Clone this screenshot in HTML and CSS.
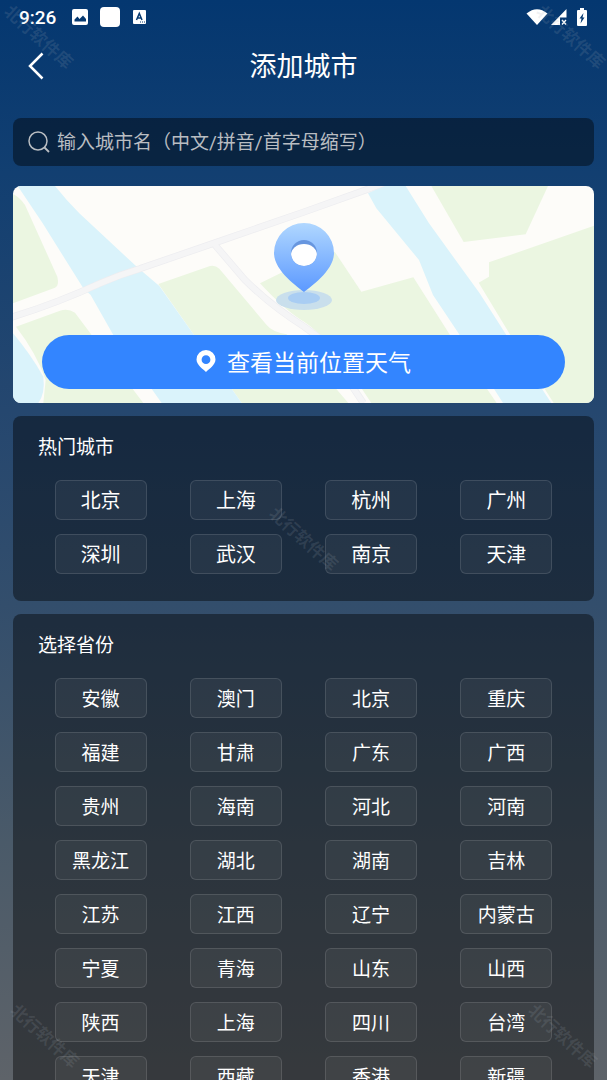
FILE: index.html
```html
<!DOCTYPE html>
<html lang="zh-CN">
<head>
  <meta charset="utf-8">
  <meta name="viewport" content="width=device-width, initial-scale=1">
  <title>添加城市</title>
  <link rel="stylesheet" href="styles.css">
</head>
<body>
<div class="screen">

  <div class="statusbar">
    <span class="time">9:26</span>
    <svg class="st-image" width="16" height="16" viewBox="0 0 16 16">
      <rect width="16" height="16" rx="2" fill="#fff"/>
      <path d="M2.500 12.500v-2l3-3 2 2.500 3.500-3.500 3 3.500v2.500z" fill="#063970"/>
    </svg>
    <span class="st-app"></span>
    <svg class="st-lang" width="13" height="14" viewBox="0 0 13 14">
      <rect width="13" height="14" rx="1" fill="#fff"/>
      <path d="M3.500 10 6.300 3.500 9 10M4.500 8h3.500" fill="none" stroke="#063970" stroke-width="1.500"/>
      <path d="M7 12h1M9 12h1M11 12h1" stroke="#063970"/>
    </svg>
    <span class="spacer"></span>
    <svg width="22" height="16" viewBox="0 0 22 16">
      <path d="M.5 4.500Q11-4 21.500 4.500L11 16z" fill="#fff"/>
    </svg>
    <svg class="st-cell" width="16" height="16" viewBox="0 0 16 16">
      <path d="M15.500 0v8.500h-6.500V16H0z" fill="#fff"/>
      <path d="M11 11l4 4.500M15 11l-4 4.500" stroke="#fff" stroke-width="1.300"/>
    </svg>
    <svg class="st-battery" width="10" height="18" viewBox="0 0 10 18">
      <path d="M3 0h4v2h2q1 0 1 1v14q0 1-1 1H1q-1 0-1-1V3q0-1 1-1h2z" fill="#fff"/>
      <path d="M6.500 5 2.500 10.500h2L3.500 15.500 7.500 9.500h-2z" fill="#063970"/>
    </svg>
  </div>

  <header class="header">
    <button class="back" type="button" aria-label="返回">
      <svg width="16" height="28" viewBox="0 0 16 28">
        <path d="M14.500 1.500 2 14l12.500 12.500" fill="none" stroke="#fff" stroke-width="2.500"/>
      </svg>
    </button>
    <h1>添加城市</h1>
  </header>

  <main class="content">
    <label class="search">
      <svg width="22" height="22" viewBox="0 0 22 22">
        <circle cx="10" cy="10" r="9" fill="none" stroke="#b9bdc2" stroke-width="1.500"/>
        <path d="M16.500 16.500l4.500 4.500" stroke="#b9bdc2" stroke-width="1.800"/>
      </svg>
      <input type="text" aria-label="搜索城市" placeholder="输入城市名（中文/拼音/首字母缩写）">
    </label>

    <section class="map">
      <svg class="map-bg" viewBox="0 0 1743 651" preserveAspectRatio="xMidYMid slice">
        <rect width="1743" height="651" fill="#fdfcf9"/>
        <g transform="translate(-39 -18)">
          <!-- parks -->
          <g fill="#ebf6e1">
            <path d="M39 42Q60 52 75 75L172 290Q178 318 165 323L39 370z"/>
            <path d="M48 440 180 392Q205 385 225 398L275 465 430 669H130L137 600Q110 520 48 440z"/>
            <path d="M475 312 630 258Q645 254 658 266L800 435Q815 455 860 463L1009 627 1045 669H725z"/>
            <path d="M780 310 850 275 1004 215 1084 335 1240 292 1350 465 1490 669H1114L1086 627 960 465Q930 435 900 418 850 385 780 310z"/>
            <path d="M1294 18H1644L1577 163 1391 186z"/>
            <path d="M1782 137 1467 247V290L1436 308 1531 465 1661 669H1782z"/>
          </g>
          <!-- water -->
          <g fill="#daf3fb">
            <path d="M53 18H165Q200 62 238 100L412 262 478 318 582 465 725 669H485L340 465 272 345 250 325 128 130z"/>
            <path d="M39 460Q90 520 130 590 136 640 115 669H39z"/>
            <path d="M1104 40 1149 18H1217L1287 130 1439 340 1519 465 1654 669H1509L1379 465 1299 345 1257 240 1129 85z"/>
          </g>
          <!-- roads -->
          <g fill="none" stroke="#ededf0" stroke-width="21">
            <path d="M30 413Q170 370 300 310 360 284 420 266L640 190 912 96 1100 29 1150 10"/>
            <path d="M645 195 735 300Q810 375 912 440L960 475 1090 669"/>
          </g>
          <g fill="none" stroke="#f5f5f6" stroke-width="17">
            <path d="M645 195 735 300Q810 375 912 440L960 475 1090 669"/>
            <path d="M30 413Q170 370 300 310 360 284 420 266L640 190 912 96 1100 29 1150 10"/>
          </g>
        </g>
      </svg>
      <svg class="pin" width="62" height="88" viewBox="0 0 62 88">
        <defs>
          <linearGradient id="pinFill" x1="0" y1="0" x2="0" y2="1">
            <stop offset="0" stop-color="#b0d7ff"/>
            <stop offset="1" stop-color="#5c99ff"/>
          </linearGradient>
          <clipPath id="hole"><circle cx="31" cy="30" r="13"/></clipPath>
        </defs>
        <ellipse cx="31" cy="77" rx="28" ry="10" fill="#c9dfec"/>
        <ellipse cx="31" cy="75" rx="16" ry="6" fill="#a9cdf3"/>
        <path d="M31 69C25 64 1 48 1 30a30 30 0 0 1 60 0C61 48 37 64 31 69z" fill="url(#pinFill)"/>
        <circle cx="31" cy="30" r="13" fill="#6796df"/>
        <ellipse cx="31" cy="32" rx="13" ry="11" fill="#fff" clip-path="url(#hole)"/>
      </svg>
      <button class="locate" type="button">
        <svg width="20" height="22" viewBox="0 0 20 22">
          <path fill-rule="evenodd" d="M10 22C7 19 .5 15 .5 9.500a9.500 9.500 0 0 1 19 0C19.500 15 13 19 10 22zM10 5.300a4.400 4.400 0 1 0 0 8.800 4.400 4.400 0 0 0 0-8.800z" fill="#fff"/>
        </svg>
        查看当前位置天气
      </button>
    </section>

    <section class="panel hot">
      <h2>热门城市</h2>
      <div class="grid">
        <button type="button">北京</button>
        <button type="button">上海</button>
        <button type="button">杭州</button>
        <button type="button">广州</button>
        <button type="button">深圳</button>
        <button type="button">武汉</button>
        <button type="button">南京</button>
        <button type="button">天津</button>
      </div>
    </section>

    <section class="panel">
      <h2>选择省份</h2>
      <div class="grid">
        <button type="button">安徽</button>
        <button type="button">澳门</button>
        <button type="button">北京</button>
        <button type="button">重庆</button>
        <button type="button">福建</button>
        <button type="button">甘肃</button>
        <button type="button">广东</button>
        <button type="button">广西</button>
        <button type="button">贵州</button>
        <button type="button">海南</button>
        <button type="button">河北</button>
        <button type="button">河南</button>
        <button type="button">黑龙江</button>
        <button type="button">湖北</button>
        <button type="button">湖南</button>
        <button type="button">吉林</button>
        <button type="button">江苏</button>
        <button type="button">江西</button>
        <button type="button">辽宁</button>
        <button type="button">内蒙古</button>
        <button type="button">宁夏</button>
        <button type="button">青海</button>
        <button type="button">山东</button>
        <button type="button">山西</button>
        <button type="button">陕西</button>
        <button type="button">上海</button>
        <button type="button">四川</button>
        <button type="button">台湾</button>
        <button type="button">天津</button>
        <button type="button">西藏</button>
        <button type="button">香港</button>
        <button type="button">新疆</button>
      </div>
    </section>
  </main>

  <span class="mark mark-tl">北行软件库</span>
  <span class="mark mark-tr">北行软件库</span>
  <span class="mark mark-mid">北行软件库</span>
  <span class="mark mark-bl">北行软件库</span>
  <span class="mark mark-br">北行软件库</span>
</div>
</body>
</html>
```
FILE: styles.css
```css
* {
  box-sizing: border-box;
}
body {
  margin: 0;
  font-family: Roboto, "Noto Sans CJK SC", sans-serif;
  color: #fff;
}
button, input {
  font-family: inherit;
  color: inherit;
  margin: 0;
}
svg {
  display: block;
  flex: none;
}
.screen {
  position: relative;
  height: 100vh;
  overflow: hidden;
  background: linear-gradient(#043770 0%, #123f71 16%, #25476f 38%, #334e6c 56%, #4a5a69 78%, #5e6369 100%);
}

/* status bar */
.statusbar {
  display: flex;
  align-items: center;
  height: 34px;
  padding: 0 20px 0 19px;
}
.time {
  font-size: 19px;
  font-weight: 500;
}
.st-image {
  margin-left: 16px;
}
.st-app {
  width: 20px;
  height: 20px;
  margin: 0 13px 0 12px;
  border-radius: 4px;
  background: #fff;
}
.spacer {
  flex: 1;
}
.st-cell {
  margin-left: 3px;
}
.st-battery {
  margin-left: 10px;
}

/* title */
.header {
  display: grid;
  grid-template-columns: 72px 1fr 72px;
  align-items: center;
  height: 64px;
}
.header h1 {
  margin: 0;
  padding-top: 2px;
  font-size: 27px;
  font-weight: 400;
  line-height: 40px;
  text-align: center;
}
.back {
  display: flex;
  justify-content: center;
  height: 64px;
  padding: 0;
  align-items: center;
  border: 0;
  background: none;
}

.content {
  display: flex;
  flex-direction: column;
  gap: 13px;
  padding: 20px 13px 0;
}
.search {
  display: flex;
  align-items: center;
  gap: 7px;
  height: 48px;
  margin-bottom: 7px;
  padding: 0 15px;
  border-radius: 8px;
  background: rgba(0, 0, 0, .42);
}
.search input {
  flex: 1;
  min-width: 0;
  padding: 0;
  border: 0;
  outline: 0;
  background: none;
  font-size: 19px;
}
.search input::placeholder {
  color: #b9bdc2;
  opacity: 1;
}

/* map card */
.map {
  position: relative;
  display: flex;
  flex-direction: column;
  align-items: center;
  padding: 37px 29px 14px;
  border-radius: 8px;
  overflow: hidden;
}
.map-bg {
  position: absolute;
  top: 0;
  left: 0;
  width: 100%;
  height: 100%;
}
.pin {
  position: relative;
}
.locate {
  position: relative;
  display: flex;
  align-items: center;
  justify-content: center;
  gap: 11px;
  width: 100%;
  height: 54px;
  margin: 24px 0 0;
  padding: 0 0 2px;
  border: 0;
  border-radius: 27px;
  background: #3385ff;
  font-size: 23px;
}

/* city lists */
.panel {
  padding: 17px 20px 20px;
  border-radius: 8px;
  background: rgba(0, 0, 0, .42);
}
.panel h2 {
  margin: 0 0 10px 5px;
  font-size: 19px;
  font-weight: 400;
  line-height: 30px;
}
.grid {
  display: grid;
  grid-template-columns: repeat(4, 1fr);
  grid-auto-rows: 54px;
  place-items: center;
}
.grid button {
  width: 92px;
  height: 40px;
  padding: 0 0 2px;
  border: 1px solid rgba(255, 255, 255, .12);
  border-radius: 6px;
  background: rgba(255, 255, 255, .05);
  font-size: 19px;
}
.hot .grid button {
  font-size: 20px;
}

/* watermark */
.mark {
  position: absolute;
  font-size: 17px;
  font-weight: 700;
  line-height: 18px;
  white-space: nowrap;
  color: rgba(160, 170, 180, .16);
  transform: rotate(42deg);
  pointer-events: none;
}
.mark-tl {
  top: 28px;
  left: -4px;
}
.mark-tr {
  top: 28px;
  right: -6px;
}
.mark-mid {
  top: 530px;
  left: 261px;
}
.mark-bl {
  bottom: 35px;
  left: 2px;
}
.mark-br {
  bottom: 35px;
  right: 2px;
}
```
